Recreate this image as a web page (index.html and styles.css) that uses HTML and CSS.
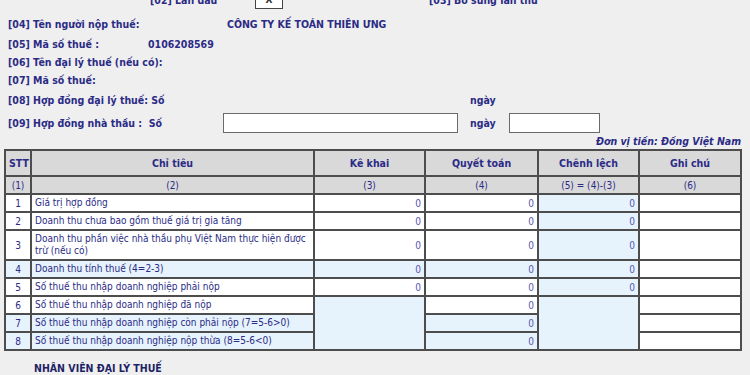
FILE: index.html
```html
<!DOCTYPE html>
<html lang="vi">
<head>
<meta charset="utf-8">
<link rel="stylesheet" href="styles.css">
</head>
<body>
<div class="page">
  <div class="row r-top">
    <span class="lbl l02">[02] Lần đầu</span>
    <span class="xbox">X</span>
    <span class="lbl l03">[03] Bổ sung lần thứ</span>
  </div>
  <div class="row r04">
    <span class="lbl w04">[04] Tên người nộp thuế:</span>
    <span class="lbl">CÔNG TY KẾ TOÁN THIÊN ƯNG</span>
  </div>
  <div class="row r05">
    <span class="lbl w05">[05] Mã số thuế :</span>
    <span class="lbl">0106208569</span>
  </div>
  <div class="row r06"><span class="lbl">[06] Tên đại lý thuế (nếu có):</span></div>
  <div class="row r07"><span class="lbl">[07] Mã số thuế:</span></div>
  <div class="row r08">
    <span class="lbl w08">[08] Hợp đồng đại lý thuế: Số</span>
    <span class="lbl">ngày</span>
  </div>
  <div class="row r09">
    <span class="lbl w09">[09] Hợp đồng nhà thầu :&nbsp; Số</span>
    <span class="inp inp-so"></span>
    <span class="lbl ngay">ngày</span>
    <span class="inp inp-ngay"></span>
  </div>
  <div class="unit">Đơn vị tiền: Đồng Việt Nam</div>

  <table class="grid">
    <colgroup>
      <col class="c1"><col class="c2"><col class="c3"><col class="c4"><col class="c5"><col class="c6">
    </colgroup>
    <thead>
      <tr class="h1">
        <th>STT</th><th>Chỉ tiêu</th><th>Kê khai</th><th>Quyết toán</th><th>Chênh lệch</th><th>Ghi chú</th>
      </tr>
      <tr class="h2">
        <th>(1)</th><th>(2)</th><th>(3)</th><th>(4)</th><th>(5) = (4)-(3)</th><th>(6)</th>
      </tr>
    </thead>
    <tbody>
      <tr>
        <td class="stt">1</td><td class="name">Giá trị hợp đồng</td>
        <td class="num">0</td><td class="num">0</td><td class="num blue">0</td><td></td>
      </tr>
      <tr>
        <td class="stt">2</td><td class="name">Doanh thu chưa bao gồm thuế giá trị gia tăng</td>
        <td class="num">0</td><td class="num">0</td><td class="num blue">0</td><td></td>
      </tr>
      <tr class="tall">
        <td class="stt">3</td><td class="name">Doanh thu phần việc nhà thầu phụ Việt Nam thực hiện được trừ (nếu có)</td>
        <td class="num">0</td><td class="num">0</td><td class="num blue">0</td><td></td>
      </tr>
      <tr>
        <td class="stt blue">4</td><td class="name blue">Doanh thu tính thuế (4=2-3)</td>
        <td class="num blue">0</td><td class="num blue">0</td><td class="num blue">0</td><td></td>
      </tr>
      <tr>
        <td class="stt">5</td><td class="name">Số thuế thu nhập doanh nghiệp phải nộp</td>
        <td class="num">0</td><td class="num">0</td><td class="num blue">0</td><td></td>
      </tr>
      <tr>
        <td class="stt">6</td><td class="name">Số thuế thu nhập doanh nghiệp đã nộp</td>
        <td class="blue" rowspan="3"></td><td class="num">0</td><td class="blue" rowspan="3"></td><td></td>
      </tr>
      <tr>
        <td class="stt blue">7</td><td class="name blue">Số thuế thu nhập doanh nghiệp còn phải nộp (7=5-6&gt;0)</td>
        <td class="num blue">0</td><td></td>
      </tr>
      <tr>
        <td class="stt blue">8</td><td class="name blue">Số thuế thu nhập doanh nghiệp nộp thừa (8=5-6&lt;0)</td>
        <td class="num blue">0</td><td></td>
      </tr>
    </tbody>
  </table>

  <div class="staff">NHÂN VIÊN ĐẠI LÝ THUẾ</div>
</div>
</body>
</html>
```

FILE: styles.css
```css
html, body {
  margin: 0;
  padding: 0;
  background: #efefef;
}
body {
  width: 750px;
  height: 375px;
  overflow: hidden;
  font-family: "DejaVu Sans Condensed", "DejaVu Sans", sans-serif;
  color: #2b2b86;
}
.page {
  padding-left: 8px;
}
.row {
  display: flex;
  align-items: center;
  height: 18px;
}
.lbl {
  font-weight: bold;
  font-size: 10.5px;
  white-space: nowrap;
}
.r-top {
  margin-top: -9px;
}
.l02 {
  margin-left: 142px;
  width: 105px;
}
.xbox {
  box-sizing: border-box;
  width: 28px;
  height: 18px;
  border: 1px solid #444;
  background: #fff;
  font-size: 10px;
  font-weight: bold;
  text-align: center;
  line-height: 16px;
  color: #333;
}
.l03 {
  margin-left: 146px;
}
.r04 { margin-top: 6px; }
.w04 { width: 219px; }
.w05 { width: 140px; }
.r05 { margin-top: 2px; }
.r08 { margin-top: 2px; }
.w08 { width: 462px; }
.r09 { margin-top: 4px; height: 20px; }
.w09 { width: 215px; }
.inp {
  box-sizing: border-box;
  height: 20px;
  background: #fff;
  border: 1px solid #6a6a6a;
}
.inp-so { width: 235px; }
.ngay { margin-left: 12px; width: 39px; }
.inp-ngay { width: 91px; }
.unit {
  height: 16px;
  line-height: 16px;
  text-align: right;
  padding-right: 9px;
  font-size: 10.5px;
  font-weight: bold;
  font-style: italic;
}

.grid {
  margin-left: -4px;
  width: 738px;
  table-layout: fixed;
  border-collapse: collapse;
  border: 2px solid #4d4d4d;
  font-size: 10px;
}
.c1 { width: 26px; }
.c2 { width: 283px; }
.c3 { width: 111px; }
.c4 { width: 113px; }
.c5 { width: 101px; }
.c6 { width: 102px; }
.grid th, .grid td {
  border: 2px solid #4d4d4d;
  padding: 0 3px;
  height: 16px;
  background: #fff;
  overflow: hidden;
}
.grid th {
  background: #d9d9d9;
  text-align: center;
  color: #2b2b86;
}
.h1 th {
  font-weight: bold;
  font-size: 10.5px;
  height: 24px;
}
.h2 th {
  font-weight: normal;
  height: 16px;
}
.grid td.blue { background: #e6f2fc; }
.stt { text-align: center; }
.name {
  text-align: left;
  line-height: 12px;
}
.num {
  text-align: right;
  color: #5656b0;
}
.tall td { height: 28px; }
.staff {
  margin-top: 11px;
  margin-left: 26px;
  font-weight: bold;
  font-size: 10.5px;
  color: #1f1f66;
}
```
